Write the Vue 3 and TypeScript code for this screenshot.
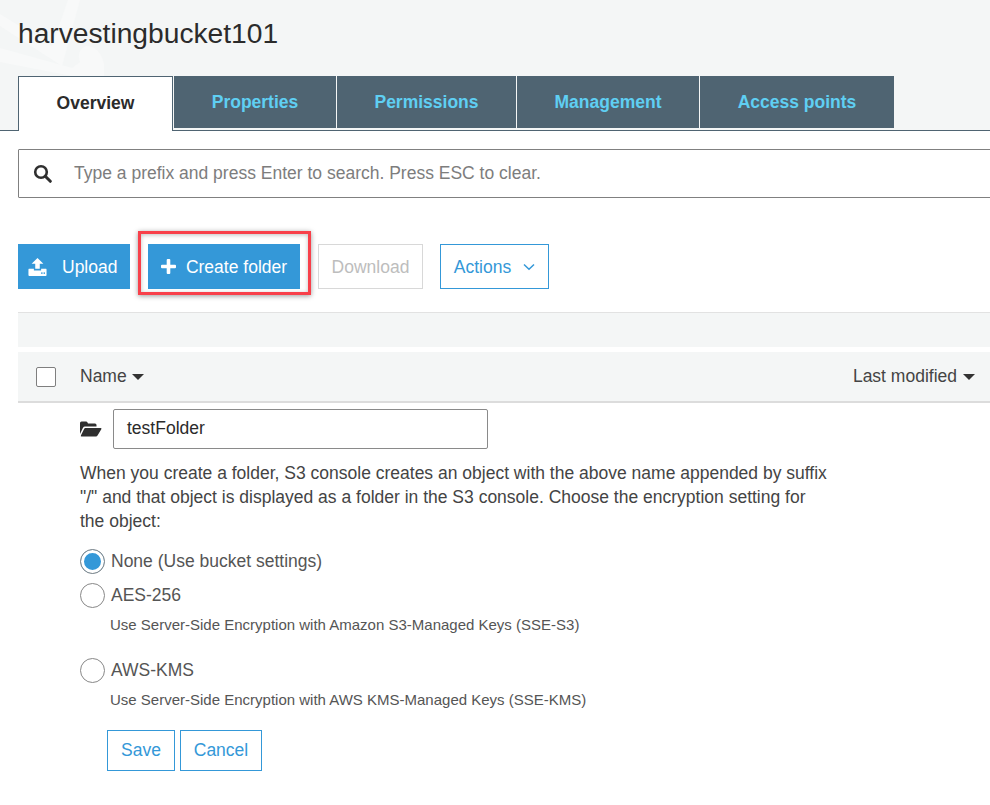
<script setup lang="ts">
const tabs: { label: string; width: number }[] = [
  { label: 'Properties', width: 162 },
  { label: 'Permissions', width: 179 },
  { label: 'Management', width: 182 },
  { label: 'Access points', width: 194 },
]
</script>

<template>
  <div class="page">
    <header class="head">
      <svg class="mark" width="110" height="130" viewBox="0 0 110 130" aria-hidden="true">
        <path d="M0 26 L62 66 L80 0 L68 0 L52 46 L0 14 Z" fill="#f8f9f9" />
        <path d="M0 62 L72 76 L104 76 L104 64 Q100 46 86 46 Q76 50 80 62 L72 68 L0 48 Z" fill="#f8f9f9" />
      </svg>
      <h1 class="title">harvestingbucket101</h1>
      <nav class="tabs">
        <div class="tab active">Overview</div>
        <div v-for="t in tabs" :key="t.label" class="tab" :style="{ width: t.width + 'px' }">{{ t.label }}</div>
      </nav>
    </header>

    <div class="search">
      <svg class="search-icon" width="19" height="19" viewBox="0 0 19 19" aria-hidden="true">
        <circle cx="8" cy="8" r="5.8" fill="none" stroke="#2f2f2f" stroke-width="2.6" />
        <path d="M12.3 12.3 L17.3 17.3" stroke="#2f2f2f" stroke-width="3" stroke-linecap="round" />
      </svg>
      <span class="placeholder">Type a prefix and press Enter to search. Press ESC to clear.</span>
    </div>

    <div class="actions">
      <button class="btn primary upload">
        <svg width="19" height="18" viewBox="0 0 21 20" preserveAspectRatio="none" aria-hidden="true">
          <path d="M10.5 0 L17 6.5 H13 V12 H8 V6.5 H4 Z" fill="#fff" />
          <path d="M1 12 H6.5 V14 H14.5 V12 H20 Q20.5 12 20.5 13 V19 Q20.5 20 19.5 20 H1.5 Q0.5 20 0.5 19 V13 Q0.5 12 1 12 Z" fill="#fff" />
          <rect x="14.5" y="16" width="1.6" height="1.6" fill="#3498d8" />
          <rect x="17.2" y="16" width="1.6" height="1.6" fill="#3498d8" />
        </svg>
        <span>Upload</span>
      </button>
      <div class="highlight">
        <button class="btn primary create">
          <svg width="15" height="15" viewBox="0 0 15 15" aria-hidden="true">
            <path d="M5.7 1 Q5.7 0 6.7 0 H8.3 Q9.3 0 9.3 1 V5.7 H14 Q15 5.7 15 6.7 V8.3 Q15 9.3 14 9.3 H9.3 V14 Q9.3 15 8.3 15 H6.7 Q5.7 15 5.7 14 V9.3 H1 Q0 9.3 0 8.3 V6.7 Q0 5.7 1 5.7 H5.7 Z" fill="#fff" />
          </svg>
          <span>Create folder</span>
        </button>
      </div>
      <button class="btn disabled"><span>Download</span></button>
      <button class="btn outline menu">
        <span>Actions</span>
        <svg width="12" height="8" viewBox="0 0 12 8" aria-hidden="true">
          <path d="M1 1.5 L6 6.3 L11 1.5" fill="none" stroke="#3498d8" stroke-width="1.5" />
        </svg>
      </button>
    </div>

    <div class="band"></div>

    <div class="thead">
      <span class="checkbox"></span>
      <span class="th">Name <i class="caret"></i></span>
      <span class="th last">Last modified <i class="caret"></i></span>
    </div>

    <section class="form">
      <div class="name-row">
        <svg width="22" height="16" viewBox="0 0 22 16" aria-hidden="true">
          <path d="M0 13 V2 Q0 0.5 1.5 0.5 H6 Q7 0.5 7.5 1.5 L8 2.5 H15 Q16.5 2.5 16.5 4 V5.5 H5 Q3.7 5.5 3 6.7 Z" fill="#2f2f2f" />
          <path d="M5.3 7 H20.5 Q22 7 21.3 8.3 L17.5 14.6 Q17 15.5 16 15.5 H1.5 Q0.3 15.5 1 14.3 L4.2 7.8 Q4.6 7 5.3 7 Z" fill="#2f2f2f" />
        </svg>
        <div class="name-input">testFolder</div>
      </div>

      <p class="note">When you create a folder, S3 console creates an object with the above name appended by suffix "/" and that object is displayed as a folder in the S3 console. Choose the encryption setting for the object:</p>

      <div class="radio first"><span class="dot on"></span>None (Use bucket settings)</div>
      <div class="radio"><span class="dot"></span>AES-256</div>
      <div class="desc">Use Server-Side Encryption with Amazon S3-Managed Keys (SSE-S3)</div>
      <div class="radio kms"><span class="dot"></span>AWS-KMS</div>
      <div class="desc">Use Server-Side Encryption with AWS KMS-Managed Keys (SSE-KMS)</div>

      <div class="form-buttons">
        <button class="btn outline save">Save</button>
        <button class="btn outline cancel">Cancel</button>
      </div>
    </section>
  </div>
</template>

<style>
html, body { margin: 0; background: #fff; overflow: hidden; }
</style>

<style scoped>
.page {
  width: 990px;
  height: 805px;
  overflow: hidden;
  font-family: "Liberation Sans", Arial, sans-serif;
  color: #444;
}
.head {
  position: relative;
  box-sizing: border-box;
  height: 131px;
  padding: 0 0 0 18px;
  background: #f4f6f6;
  border-bottom: 1px solid #4f6472;
}
.mark { position: absolute; left: 0; top: 0; }
.title {
  position: relative;
  margin: 0;
  padding-top: 17px;
  height: 76px;
  box-sizing: border-box;
  font-size: 28.2px;
  line-height: 33px;
  font-weight: 400;
  color: #2b2b2b;
}
.tabs { position: relative; display: flex; gap: 1px; height: 52px; }
.tab {
  box-sizing: border-box;
  height: 52px;
  display: flex;
  align-items: center;
  justify-content: center;
  background: #4f6472;
  color: #5fcff3;
  font-size: 17.5px;
  font-weight: 700;
}
.tab.active {
  width: 155px;
  height: 55px;
  padding-bottom: 2px;
  background: #fff;
  color: #2b2b2b;
  border: 1px solid #4f6472;
  border-bottom: 0;
}
.search {
  box-sizing: border-box;
  display: flex;
  align-items: center;
  width: 990px;
  height: 49px;
  margin: 18px 0 0 18px;
  border: 1px solid #808080;
  border-radius: 1px;
  padding-left: 14px;
}
.search-icon { flex: none; }
.placeholder { margin-left: 22px; font-size: 17.5px; color: #7d7d7d; white-space: nowrap; }
.actions {
  display: flex;
  margin: 46px 0 0 18px;
  height: 45px;
}
.btn {
  box-sizing: border-box;
  display: flex;
  align-items: center;
  justify-content: center;
  height: 45px;
  padding: 0;
  border: 1px solid transparent;
  border-radius: 0;
  background: #fff;
  font-family: inherit;
  font-size: 17.5px;
}
.btn span { position: relative; top: 1px; }
.primary { background: #3498d8; color: #fff; }
.outline { border-color: #3498d8; color: #3498d8; }
.disabled { border-color: #d8d8d8; color: #bdbdbd; width: 105px; margin-left: 18px; }
.upload { width: 112px; gap: 15px; justify-content: flex-start; padding-left: 9px; }
.highlight { position: relative; margin-left: 18px; }
.highlight::after {
  content: "";
  position: absolute;
  left: -10px;
  top: -13px;
  width: 173px;
  height: 64px;
  box-sizing: border-box;
  border: 3px solid #f8404a;
  box-shadow: 0 1px 5px rgba(0, 0, 0, 0.4), inset 0 1px 4px rgba(0, 0, 0, 0.25);
  pointer-events: none;
}
.create { width: 152px; gap: 10px; }
.menu { width: 109px; margin-left: 17px; gap: 12px; }
.band {
  box-sizing: border-box;
  height: 35px;
  margin: 23px 0 0 18px;
  background: #f4f6f6;
  border-top: 1px solid #e2e2e2;
}
.thead {
  box-sizing: border-box;
  display: flex;
  align-items: center;
  height: 51px;
  margin: 5px 0 0 18px;
  padding: 0 15px 0 18px;
  background: #f4f6f6;
  border-bottom: 2px solid #dcdcdc;
  font-size: 17.5px;
  color: #444;
}
.checkbox {
  box-sizing: border-box;
  width: 20px;
  height: 20px;
  border: 1px solid #7f7f7f;
  border-radius: 2px;
  background: #fff;
}
.th { display: flex; align-items: center; gap: 5px; margin-left: 24px; white-space: nowrap; }
.th.last { margin-left: auto; gap: 6px; }
.caret {
  width: 0;
  height: 0;
  border-left: 6px solid transparent;
  border-right: 6px solid transparent;
  border-top: 6px solid #333;
}
.form { padding: 6px 0 0 80px; }
.name-row { display: flex; align-items: center; gap: 11px; }
.name-input {
  box-sizing: border-box;
  width: 375px;
  height: 40px;
  padding: 0 0 2px 13px;
  display: flex;
  align-items: center;
  border: 1px solid #8a8a8a;
  border-radius: 2px;
  font-size: 17.5px;
  color: #2b2b2b;
}
.note {
  width: 750px;
  margin: 12px 0 0;
  font-size: 17.5px;
  line-height: 24px;
  color: #444;
}
.radio {
  display: flex;
  align-items: center;
  gap: 6px;
  height: 26px;
  font-size: 17.5px;
  color: #555;
  white-space: nowrap;
}
.radio.first { margin-top: 15px; }
.radio:not(.first) { margin-top: 8px; }
.radio.kms { margin-top: 23px; }
.dot {
  box-sizing: border-box;
  width: 25px;
  height: 25px;
  border: 1px solid #888;
  border-radius: 50%;
  background: #fff;
}
.dot.on { background: #3498d8; box-shadow: inset 0 0 0 3px #fff; }
.desc { margin: 8px 0 0 30px; font-size: 15px; line-height: 18px; color: #555; }
.form-buttons { display: flex; gap: 5px; margin: 21px 0 0 27px; }
.save { width: 68px; height: 41px; }
.cancel { width: 82px; height: 41px; }
</style>
